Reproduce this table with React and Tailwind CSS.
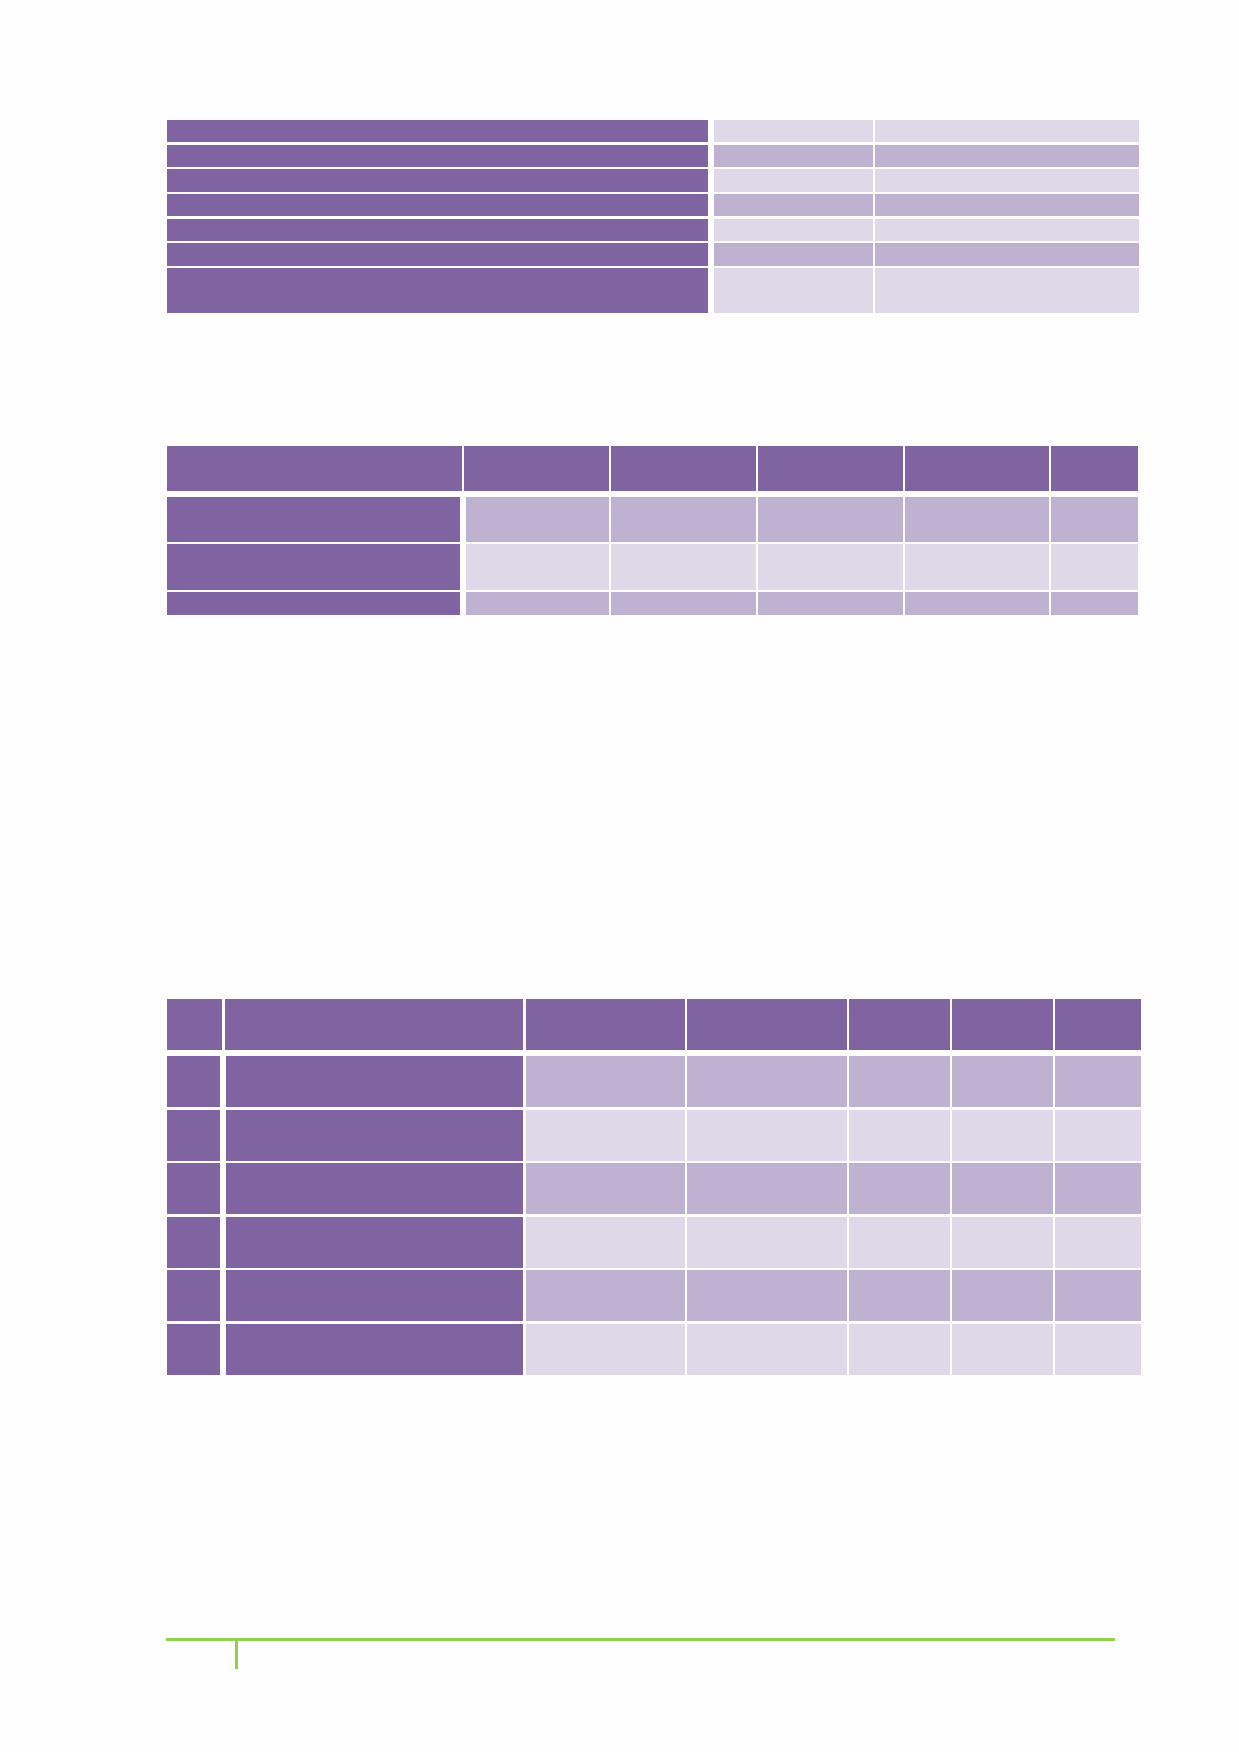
const dark = 'bg-[#8064a2]'
const mid = 'bg-[#bfb1d0]'
const light = 'bg-[#dfd8e8]'

function Cells({ widths, tones, height }) {
  return (
    <div className="flex gap-x-[2px]" style={{ height }}>
      {widths.map((w, i) => (
        <div key={i} className={`shrink-0 ${tones[i]}`} style={{ width: w }} />
      ))}
    </div>
  )
}

function SummaryTable() {
  const heights = [22.3, 22.3, 22.3, 22.3, 22.3, 22.3, 45]
  return (
    <div className="flex flex-col gap-y-[2.4px]">
      {heights.map((h, i) => {
        const tone = i % 2 === 0 ? light : mid
        return (
          <div key={i} className="flex" style={{ height: h }}>
            <div className={`w-[541px] shrink-0 ${dark}`} />
            <div className="ml-[6px] flex gap-x-[2px]">
              <div className={`w-[159px] shrink-0 ${tone}`} />
              <div className={`w-[264px] shrink-0 ${tone}`} />
            </div>
          </div>
        )
      })}
    </div>
  )
}

function YearTable() {
  // header widths after the label column
  const cols = [145, 145, 145, 144, 87]
  const rows = [
    { h: 45, tone: mid },
    { h: 46, tone: light },
    { h: 23, tone: mid },
  ]
  return (
    <div className="flex flex-col">
      <Cells widths={[295, ...cols]} tones={Array(6).fill(dark)} height={45} />
      <div className="mt-[6px] flex flex-col gap-y-[2px]">
        {rows.map((r, i) => (
          <div key={i} className="flex" style={{ height: r.h }}>
            <div className={`w-[293px] shrink-0 ${dark}`} />
            <div className="ml-[6px] flex gap-x-[2px]">
              <div className={`w-[143px] shrink-0 ${r.tone}`} />
              {cols.slice(1).map((w, j) => (
                <div key={j} className={`shrink-0 ${r.tone}`} style={{ width: w }} />
              ))}
            </div>
          </div>
        ))}
      </div>
    </div>
  )
}

function DetailTable() {
  const cols = [159, 160, 101, 101, 86]
  return (
    <div className="flex flex-col">
      <div className="flex gap-x-[3px]" style={{ height: 51 }}>
        <div className={`w-[55px] shrink-0 ${dark}`} />
        <div className={`w-[298px] shrink-0 ${dark}`} />
        <div className="flex gap-x-[2px]">
          {cols.map((w, j) => (
            <div key={j} className={`shrink-0 ${dark}`} style={{ width: w }} />
          ))}
        </div>
      </div>
      <div className="mt-[6px] flex flex-col gap-y-[2.2px]">
        {[0, 1, 2, 3, 4, 5].map((i) => {
          const tone = i % 2 === 0 ? mid : light
          return (
            <div key={i} className="flex h-[51.3px]">
              <div className={`w-[53px] shrink-0 ${dark}`} />
              <div className={`ml-[6px] w-[297px] shrink-0 ${dark}`} />
              <div className="ml-[3px] flex gap-x-[2px]">
                {cols.map((w, j) => (
                  <div key={j} className={`shrink-0 ${tone}`} style={{ width: w }} />
                ))}
              </div>
            </div>
          )
        })}
      </div>
    </div>
  )
}

export default function App() {
  return (
    <div className="h-[1752px] w-[1239px] bg-[#fefefe] pl-[167px] pt-[120px]">
      <SummaryTable />
      <div className="mt-[133px]">
        <YearTable />
      </div>
      <div className="mt-[384px]">
        <DetailTable />
      </div>
      <div className="ml-[-1px] mt-[263px] w-[949px]">
        <div className="h-[3px] bg-[#92d050]" />
        <div className="ml-[69px] h-[28px] w-[2.5px] bg-[#92d050]" />
      </div>
    </div>
  )
}
